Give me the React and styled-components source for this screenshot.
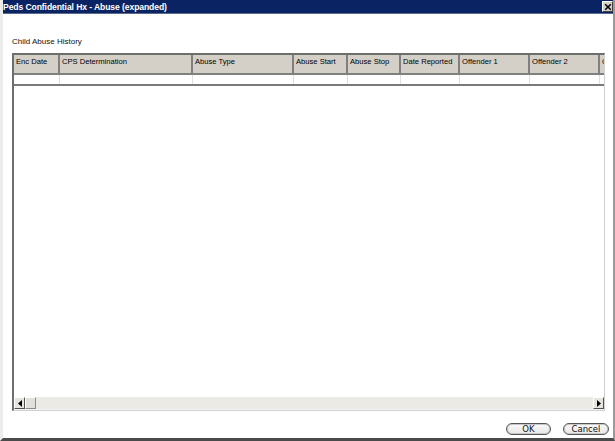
import React from "react";
import styled, { createGlobalStyle } from "styled-components";

const GlobalStyle = createGlobalStyle`
  html, body {
    margin: 0;
    padding: 0;
    background: #ffffff;
  }
  body {
    font-family: "Liberation Sans", Arial, sans-serif;
  }
`;

const columns = [
  { title: "Enc Date", width: 46 },
  { title: "CPS Determination", width: 133 },
  { title: "Abuse Type", width: 101 },
  { title: "Abuse Start", width: 54 },
  { title: "Abuse Stop", width: 53 },
  { title: "Date Reported", width: 59 },
  { title: "Offender 1", width: 70 },
  { title: "Offender 2", width: 70 },
  { title: "Offender 3", width: 70 },
];

const App = () => {
  return (
    <>
      <GlobalStyle />
      <Window>
        <TitleBar>
          <Title>Peds Confidential Hx - Abuse (expanded)</Title>
          <CloseBox>
            <svg width="8" height="8" viewBox="0 0 8 8">
              <path d="M1.2 1.2 L6.8 6.8 M6.8 1.2 L1.2 6.8" stroke="#000" strokeWidth="1.5" />
            </svg>
          </CloseBox>
        </TitleBar>
        <Body>
          <Label>Child Abuse History</Label>
          <GridFrame>
            <GridArea>
              <Row>
                {columns.map((col) => (
                  <HeaderCell key={col.title} style={{ width: col.width }}>
                    {col.title}
                  </HeaderCell>
                ))}
              </Row>
              <Row>
                {columns.map((col) => (
                  <DataCell key={col.title} style={{ width: col.width }} />
                ))}
              </Row>
            </GridArea>
            <HScroll>
              <ScrollButton>
                <svg width="4" height="7" viewBox="0 0 4 7">
                  <path d="M4 0 L0 3.5 L4 7 Z" fill="#000" />
                </svg>
              </ScrollButton>
              <Thumb />
              <Track />
              <ScrollButton>
                <svg width="4" height="7" viewBox="0 0 4 7">
                  <path d="M0 0 L4 3.5 L0 7 Z" fill="#000" />
                </svg>
              </ScrollButton>
            </HScroll>
          </GridFrame>
        </Body>
        <Footer>
          <PillButton $width={45}>OK</PillButton>
          <PillButton $width={46}>Cancel</PillButton>
        </Footer>
      </Window>
    </>
  );
};

const Window = styled.div`
  width: 615px;
  height: 441px;
  box-sizing: border-box;
  display: flex;
  flex-direction: column;
  background: #ffffff;
  border-left: 3px solid #ececec;
  border-right: 2px solid #9a9a9a;
  border-bottom: 3px solid #4a4a4a;
  overflow: hidden;
`;

const TitleBar = styled.div`
  flex: none;
  height: 13px;
  display: flex;
  align-items: center;
  justify-content: space-between;
  background: #0a2463;
  margin-left: -3px;
  margin-right: -2px;
  padding: 0 2px 0 3px;
  border-bottom: 1px solid #5a6a8a;
`;

const Title = styled.span`
  color: #ffffff;
  font-weight: bold;
  font-size: 8.6px;
  font-family: "Liberation Sans", Arial, sans-serif;
  letter-spacing: -0.1px;
`;

const CloseBox = styled.div`
  width: 9px;
  height: 9px;
  display: flex;
  align-items: center;
  justify-content: center;
  background: #d4d0c8;
  border: 1px solid #ffffff;
  border-right-color: #404040;
  border-bottom-color: #404040;
`;

const Body = styled.div`
  flex: 1;
  display: flex;
  flex-direction: column;
  padding: 23px 8px 0 9px;
  min-height: 0;
`;

const Label = styled.div`
  font-size: 8px;
  color: #111;
  height: 16px;
`;

const GridFrame = styled.div`
  flex: 1;
  display: flex;
  flex-direction: column;
  border-top: 2px solid #6e6e6e;
  border-left: 2px solid #6e6e6e;
  border-right: 1px solid #d0d0d0;
  border-bottom: 1px solid #d0d0d0;
  min-height: 0;
`;

const GridArea = styled.div`
  flex: 1;
  overflow: hidden;
  background: #ffffff;
`;

const Row = styled.div`
  display: flex;
  white-space: nowrap;
  &:last-child {
    border-bottom: 2px solid #7a7a7a;
    width: fit-content;
  }
`;

const HeaderCell = styled.div`
  flex: none;
  box-sizing: border-box;
  height: 20px;
  padding: 2px 0 0 2px;
  background: #d4d0c8;
  border-right: 2px solid #808080;
  border-bottom: 2px solid #808080;
  font-size: 7.6px;
  color: #000;
  overflow: hidden;
`;

const DataCell = styled.div`
  flex: none;
  box-sizing: border-box;
  height: 9px;
  border-right: 1px solid #e0e0e0;
  background: #ffffff;
`;

const HScroll = styled.div`
  flex: none;
  height: 12px;
  display: flex;
  background: #ebeae5;
  border-bottom: 1px solid #f4f4f4;
`;

const ScrollButton = styled.div`
  width: 11px;
  height: 12px;
  box-sizing: border-box;
  display: flex;
  align-items: center;
  justify-content: center;
  background: #e6e4de;
  border: 1px solid #ffffff;
  border-right-color: #505050;
  border-bottom-color: #505050;
`;

const Thumb = styled.div`
  width: 11px;
  height: 12px;
  box-sizing: border-box;
  background: #e2e0da;
  border: 1px solid #ffffff;
  border-right-color: #8a8a8a;
  border-bottom-color: #8a8a8a;
`;

const Track = styled.div`
  flex: 1;
`;

const Footer = styled.div`
  flex: none;
  height: 27px;
  box-sizing: border-box;
  display: flex;
  align-items: flex-end;
  justify-content: flex-end;
  gap: 12px;
  padding: 0 4px 3px 0;
`;

const PillButton = styled.button`
  width: ${(p) => p.$width}px;
  height: 12px;
  padding: 0;
  border: 1px solid #555;
  border-radius: 7px;
  background: linear-gradient(#fbfbfb, #e6e6e6);
  box-shadow: inset 0 0 0 1px #c8c8c8;
  font-family: "DejaVu Sans", "Liberation Sans", sans-serif;
  font-size: 8.5px;
  line-height: 10px;
  color: #111;
`;

export default App;
